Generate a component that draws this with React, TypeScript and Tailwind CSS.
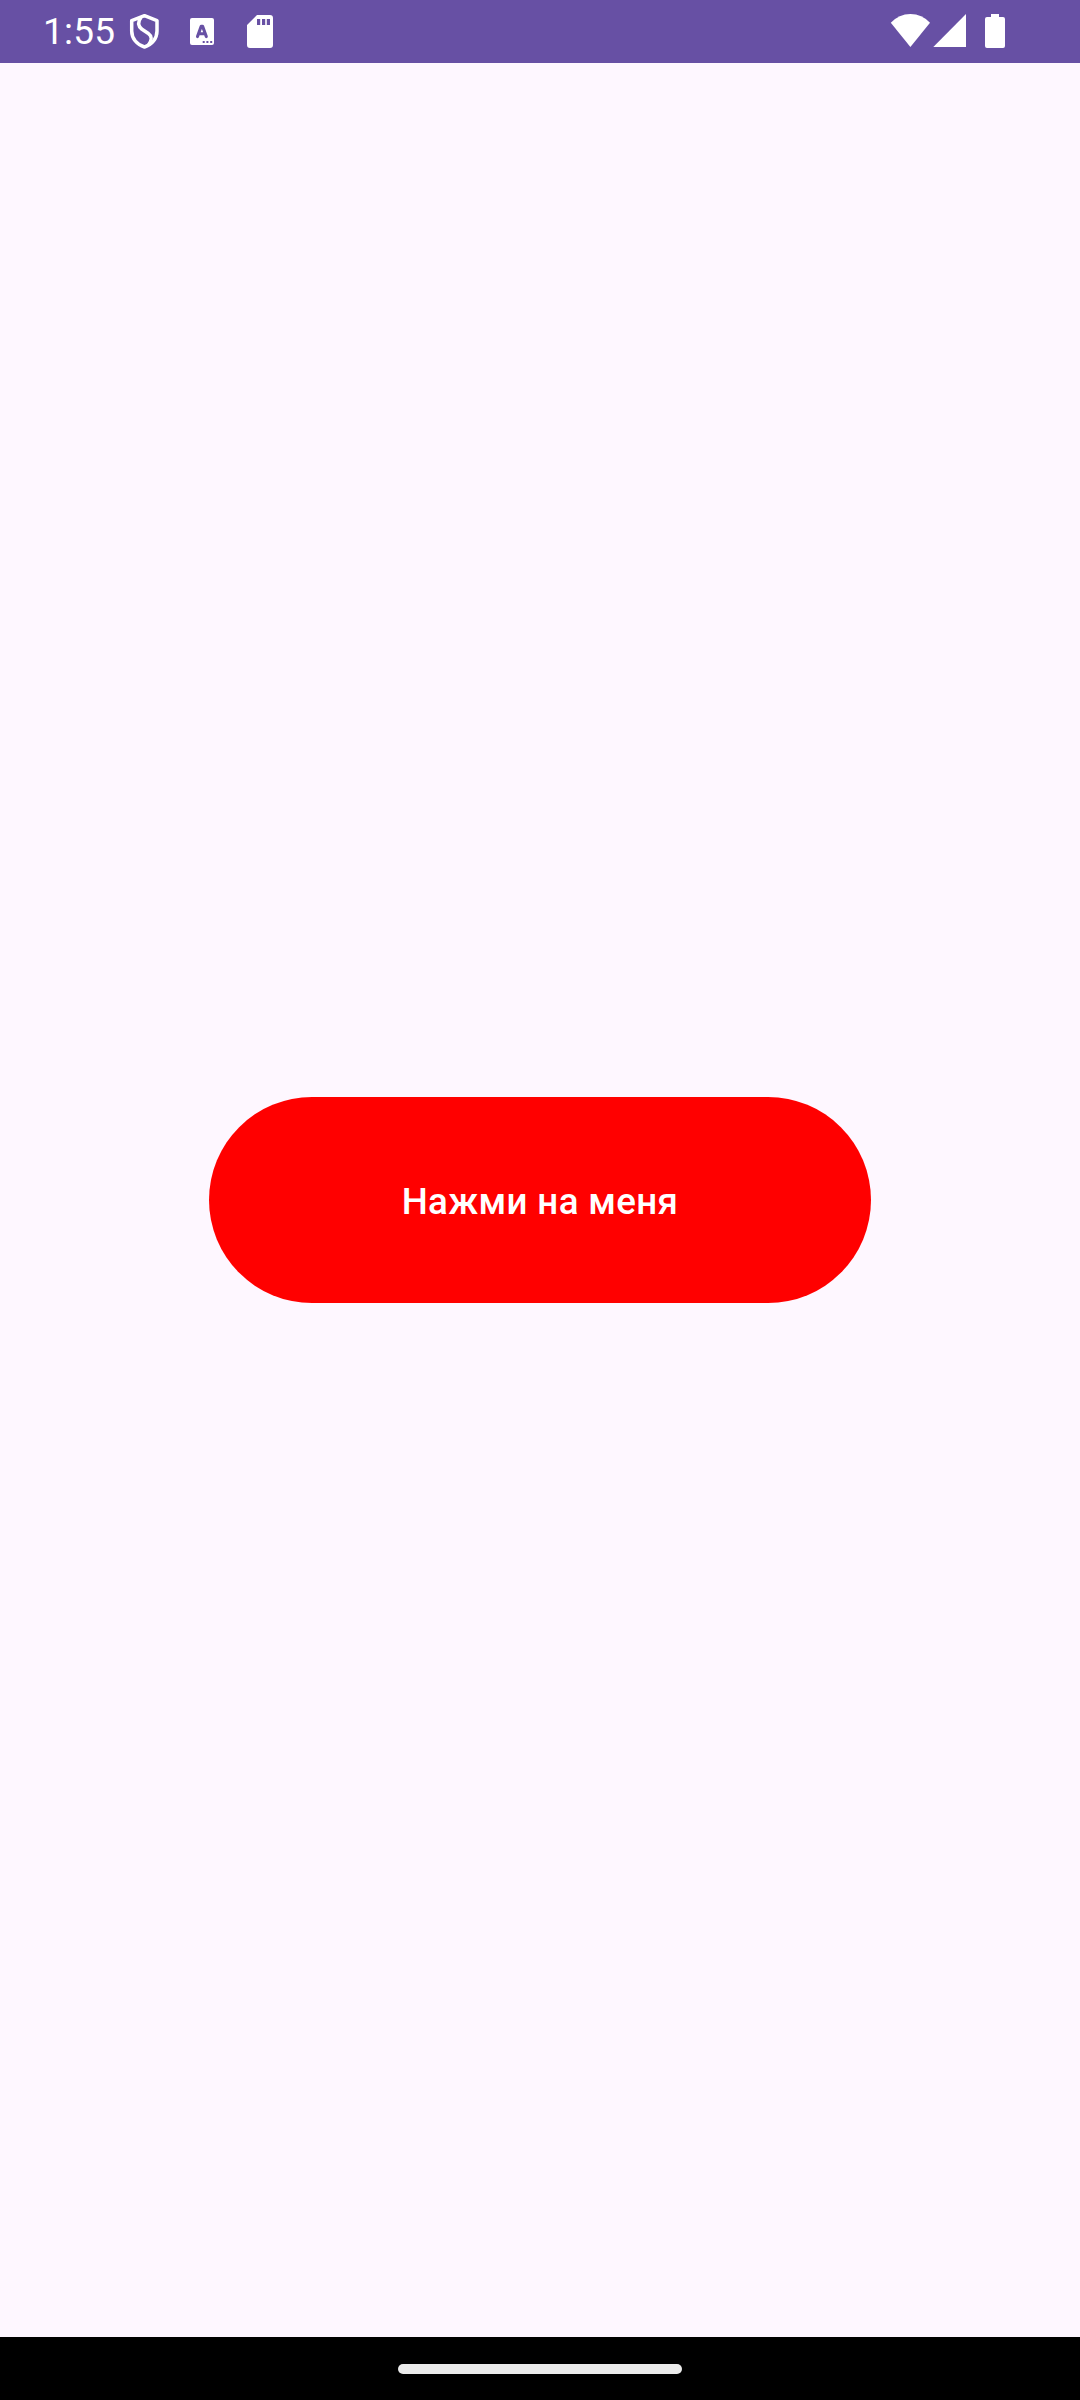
function ShieldIcon() {
  return (
    <svg className="h-[63px] w-[32px] shrink-0" viewBox="128 0 32 63" fill="none" stroke="#fff" strokeWidth="3.5" strokeLinejoin="round">
      <path d="M144.5 15.7 L157 20.6 V31 C157 38.5 152 44.8 144.5 47 C137 44.8 131.7 38.5 131.7 31 V20.6 Z" />
      <path d="M141 17.5 C137.5 22 138 26 142 29.3 L148 33.2 C152.5 36.5 152 40 148.5 45" />
    </svg>
  )
}

function LetterIcon() {
  return (
    <svg className="h-[63px] w-[24px] shrink-0" viewBox="190 0 24 63">
      <rect x="190" y="18" width="24" height="27" rx="2" fill="#fff" />
      <path d="M197.5 36.6 L201.2 26.2 H202.6 L206.3 36.6 M199 33.8 H204.8" fill="none" stroke="#6750a4" strokeWidth="3.1" strokeLinecap="round" strokeLinejoin="round" />
      <path d="M202.7 41h2v2h-2z M206.4 41h2v2h-2z M210.2 41h2v2h-2z" fill="#6750a4" />
    </svg>
  )
}

function SdCardIcon() {
  return (
    <svg className="h-[63px] w-[26px] shrink-0" viewBox="247 0 26 63">
      <path
        fill="#fff"
        fillRule="evenodd"
        d="M257 15 H270 Q273 15 273 18 V45 Q273 48 270 48 H250 Q247 48 247 45 V25 Z M257 19 V25 H260.2 V19 Z M262 19 V25 H265.2 V19 Z M266.8 19 V25 H270 V19 Z"
      />
    </svg>
  )
}

function WifiIcon() {
  return (
    <svg className="h-[63px] w-[40px] shrink-0" viewBox="890 0 40 63">
      <path d="M890.8 22.8 Q899 14 910.4 14 Q922 14 930 22.8 L910.4 47 Z" fill="#fff" />
    </svg>
  )
}

function SignalIcon() {
  return (
    <svg className="h-[63px] w-[33px] shrink-0" viewBox="933 0 33 63">
      <path d="M933.3 47 L966 14 V47 Z" fill="#fff" />
    </svg>
  )
}

function BatteryIcon() {
  return (
    <svg className="h-[63px] w-[20px] shrink-0" viewBox="985 0 20 63">
      <path d="M991 14 H999 V17 H1003 Q1005 17 1005 19 V46 Q1005 48 1003 48 H987 Q985 48 985 46 V19 Q985 17 987 17 H991 Z" fill="#fff" />
    </svg>
  )
}

export default function App() {
  return (
    <div className="flex h-[2400px] w-[1080px] flex-col overflow-hidden bg-[#fef7ff] font-['Roboto',sans-serif] text-white">
      <header className="flex h-[63px] shrink-0 items-center justify-between bg-[#6750a4] pr-[75px] pl-[43px]">
        <div className="flex items-center">
          <span className="w-[85px] pt-px text-[37px] leading-[62px] tracking-[0.2px] whitespace-nowrap">1:55</span>
          <ShieldIcon />
          <div className="ml-[30px] flex gap-[33px]">
            <LetterIcon />
            <SdCardIcon />
          </div>
        </div>
        <div className="flex items-center">
          <WifiIcon />
          <div className="ml-[3px] flex gap-[19px]">
            <SignalIcon />
            <BatteryIcon />
          </div>
        </div>
      </header>
      <main className="flex flex-1 flex-col items-center pt-[1034px]">
        <button className="flex h-[206px] w-[662px] items-center justify-center rounded-full bg-[#ff0000] pt-[4px] text-[36.75px] font-medium tracking-[0.34px] whitespace-nowrap">
          Нажми на меня
        </button>
      </main>
      <footer className="flex h-[63px] shrink-0 justify-center bg-black pt-[27px]">
        <div className="h-[10px] w-[284px] rounded-full bg-[#ebebeb]" />
      </footer>
    </div>
  )
}
